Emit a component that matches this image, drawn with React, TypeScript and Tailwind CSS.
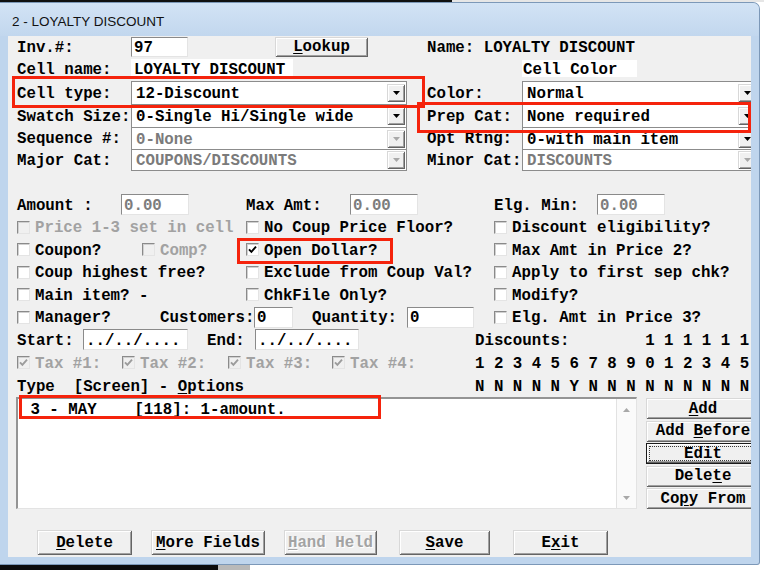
import React from "react";

// Classic 3D bevels used by buttons and the drop-down arrows.
const RAISED =
  "shadow-[inset_1px_1px_0_#d8d8d8,inset_-1px_-1px_0_#646464,inset_2px_2px_0_#ffffff,inset_-2px_-2px_0_#a0a0a0]";
const FOCUSED =
  "shadow-[inset_0_0_0_1px_#1a1a1a,inset_-2px_-2px_0_#646464,inset_2px_2px_0_#ffffff,inset_-3px_-3px_0_#a0a0a0]";
const SUNKEN =
  "border border-t-[#8a8a8a] border-l-[#8a8a8a] border-r-[#e4e4e4] border-b-[#e4e4e4]";
// The mono face sits a little high in its line box; nudge glyphs onto the row centre.
const T = "translate-y-[2px]";

function U({ children }: { children: React.ReactNode }) {
  return <span className="underline decoration-1 underline-offset-[2px]">{children}</span>;
}

function Tri({ grey, up }: { grey?: boolean; up?: boolean }) {
  return (
    <svg width="7" height="4" viewBox="0 0 7 4" className="block">
      <path d={up ? "M0 4H7L3.5 0Z" : "M0 0H7L3.5 4Z"} fill={grey ? "#a8a8a8" : "#000"} />
    </svg>
  );
}

function DropBtn({ grey }: { grey?: boolean }) {
  return (
    <div className={`mr-[1px] flex h-[18px] w-[18px] shrink-0 items-center justify-center bg-[#f0f0f0] ${RAISED}`}>
      <Tri grey={grey} />
    </div>
  );
}

function Combo({ w, text, grey, last }: { w: string; text: string; grey?: boolean; last?: boolean }) {
  return (
    <div
      className={`${w} flex h-full shrink-0 items-center border-x border-t border-[#8c8c8c] bg-white pl-[4px] ${
        last ? "border-b" : ""
      }`}
    >
      <span className={`flex-1 whitespace-pre ${T} ${grey ? "text-[#7b7b7b]" : "text-black"}`}>{text}</span>
      <DropBtn grey={grey} />
    </div>
  );
}

function Field({ w, text, grey, h }: { w: string; text: string; grey?: boolean; h?: string }) {
  return (
    <div
      className={`${w} ${h ?? "h-[21px]"} flex shrink-0 items-center whitespace-pre bg-white pl-[2px] ${SUNKEN} ${
        grey ? "text-[#7d7d7d]" : "text-black"
      }`}
    >
      <span className={T}>{text}</span>
    </div>
  );
}

function Box({ checked, disabled }: { checked?: boolean; disabled?: boolean }) {
  return (
    <span
      className={`flex h-[13px] w-[13px] shrink-0 items-center justify-center shadow-[inset_1px_1px_0_#d0d0d0] ${SUNKEN} ${
        disabled ? "bg-[#f0f0f0]" : "bg-white"
      }`}
    >
      {checked && (
        <svg width="9" height="9" viewBox="0 0 9 9" className="block">
          <path d="M1 4.3L3.4 6.8L8 1.6" fill="none" stroke={disabled ? "#9c9c9c" : "#000"} strokeWidth="1.9" />
        </svg>
      )}
    </span>
  );
}

function CheckItem({
  label,
  checked,
  disabled,
  w,
}: {
  label: string;
  checked?: boolean;
  disabled?: boolean;
  w?: string;
}) {
  return (
    <div className={`${w ?? ""} flex shrink-0 items-center gap-[5px]`}>
      <Box checked={checked} disabled={disabled} />
      <span className={`whitespace-pre ${T} ${disabled ? "text-[#a2a2a2]" : "text-black"}`}>{label}</span>
    </div>
  );
}

function Btn({
  w,
  h,
  children,
  disabled,
  focused,
  className,
}: {
  w: string;
  h: string;
  children: React.ReactNode;
  disabled?: boolean;
  focused?: boolean;
  className?: string;
}) {
  return (
    <div
      className={`${w} ${h} ${className ?? ""} relative flex shrink-0 items-center justify-center whitespace-pre bg-[#f0f0f0] ${
        focused ? FOCUSED : RAISED
      } ${disabled ? "text-[#a3a3a3] [text-shadow:1px_1px_0_#ffffff]" : "text-black"}`}
    >
      {focused && <span className="absolute inset-[3px] border border-dotted border-[#3a3a3a]" />}
      <span className="translate-y-[1px]">{children}</span>
    </div>
  );
}

function Label({ w, children, className }: { w: string; children: React.ReactNode; className?: string }) {
  return (
    <span className={`${w} ${className ?? ""} flex shrink-0 items-center whitespace-pre`}>
      <span className={T}>{children}</span>
    </span>
  );
}

export default function App() {
  return (
    <div className="relative h-[570px] w-[764px] overflow-hidden bg-white font-['Liberation_Mono',monospace] text-[15.75px] font-bold leading-none text-black">
      {/* desktop strip above the window */}
      <div className="flex h-[2px]">
        <div className="w-[452px] bg-[#101010]" />
        <div className="flex-1 bg-[#e6e6e6]" />
      </div>

      {/* window */}
      <div className="flex h-[563px] w-[760px] flex-col overflow-hidden rounded-tr-[7px] rounded-br-[3px] border-t border-r border-b border-[#7c98b8] bg-[#bfd5ed]">
        <div className="flex h-[33px] shrink-0 items-center bg-linear-to-b from-[#d2e3f5] to-[#c2d7ee] pl-[12px] pt-[5px] font-['Liberation_Sans',Arial,sans-serif] text-[13.5px] font-normal text-[#111]">
          2 - LOYALTY DISCOUNT
        </div>

        <div className="flex">
          <div className="w-[8px] shrink-0" />
          <div className="flex h-[521px] w-[743px] shrink-0 flex-col overflow-hidden bg-[#f0f0f0] pl-[9px]">
            {/* header fields */}
            <div className="flex h-[21px] shrink-0 items-center">
              <Label w="w-[114px]">Inv.#:</Label>
              <Field w="w-[57px]" h="h-[20px]" text="97" />
              <Btn w="w-[93px]" h="h-[20px]" className="ml-[87px]">
                <U>L</U>ookup
              </Btn>
              <Label w="w-auto" className="ml-[59px]">
                Name: LOYALTY DISCOUNT
              </Label>
            </div>
            <div className="flex h-[23px] shrink-0 items-center">
              <Label w="w-[114px]">Cell name:</Label>
              <div className="flex h-[20px] w-[162px] shrink-0 items-center whitespace-pre bg-white pl-[3px]">
                <span className={T}>LOYALTY DISCOUNT</span>
              </div>
              <div className="ml-[229px] flex h-[17px] w-[115px] shrink-0 items-center bg-white pl-[1px]">
                <span className={T}>Cell Color</span>
              </div>
            </div>
            <div className="h-[1px] shrink-0" />

            {/* combo boxes */}
            <div className="flex h-[23px] shrink-0">
              <Label w="w-[114px]">Cell type:</Label>
              <Combo w="w-[276px]" text="12-Discount" />
              <Label w="w-[95px]" className="ml-[20px]">Color:</Label>
              <Combo w="w-[236px]" text="Normal" />
            </div>
            <div className="flex h-[23px] shrink-0">
              <Label w="w-[114px]">Swatch Size:</Label>
              <Combo w="w-[276px]" text="0-Single Hi/Single wide" />
              <Label w="w-[95px]" className="ml-[20px]">Prep Cat:</Label>
              <Combo w="w-[236px]" text="None required" />
            </div>
            <div className="flex h-[22px] shrink-0">
              <Label w="w-[114px]">Sequence #:</Label>
              <Combo w="w-[276px]" text="0-None" grey />
              <Label w="w-[95px]" className="ml-[20px]">Opt Rtng:</Label>
              <Combo w="w-[236px]" text="0-with main item" />
            </div>
            <div className="flex h-[22px] shrink-0">
              <Label w="w-[114px]">Major Cat:</Label>
              <Combo w="w-[276px]" text="COUPONS/DISCOUNTS" grey last />
              <Label w="w-[95px]" className="ml-[20px]">Minor Cat:</Label>
              <Combo w="w-[236px]" text="DISCOUNTS" grey last />
            </div>

            <div className="h-[22px] shrink-0" />

            {/* amounts */}
            <div className="flex h-[23px] shrink-0 items-center">
              <Label w="w-[104px]">Amount :</Label>
              <Field w="w-[68px]" text="0.00" grey />
              <Label w="w-[104px]" className="ml-[57px]">Max Amt:</Label>
              <Field w="w-[68px]" text="0.00" grey />
              <Label w="w-[103px]" className="ml-[76px]">Elg. Min:</Label>
              <Field w="w-[68px]" text="0.00" grey />
            </div>

            {/* option check boxes */}
            <div className="flex h-[22px] shrink-0 items-center">
              <CheckItem w="w-[229px]" label="Price 1-3 set in cell" disabled />
              <CheckItem w="w-[248px]" label="No Coup Price Floor?" />
              <CheckItem label="Discount eligibility?" />
            </div>
            <div className="flex h-[23px] shrink-0 items-center">
              <div className="flex w-[229px] shrink-0 items-center">
                <CheckItem w="w-[125px]" label="Coupon?" />
                <CheckItem label="Comp?" disabled />
              </div>
              <CheckItem w="w-[248px]" label="Open Dollar?" checked />
              <CheckItem label="Max Amt in Price 2?" />
            </div>
            <div className="flex h-[22px] shrink-0 items-center">
              <CheckItem w="w-[229px]" label="Coup highest free?" />
              <CheckItem w="w-[248px]" label="Exclude from Coup Val?" />
              <CheckItem label="Apply to first sep chk?" />
            </div>
            <div className="flex h-[23px] shrink-0 items-center">
              <CheckItem w="w-[229px]" label="Main item? -" />
              <CheckItem w="w-[248px]" label="ChkFile Only?" />
              <CheckItem label="Modify?" />
            </div>
            <div className="flex h-[22px] shrink-0 items-center">
              <CheckItem w="w-[143px]" label="Manager?" />
              <Label w="w-[94px]">Customers:</Label>
              <Field w="w-[39px]" text="0" />
              <Label w="w-[95px]" className="ml-[19px]">Quantity:</Label>
              <Field w="w-[67px]" text="0" />
              <div className="ml-[20px]">
                <CheckItem label="Elg. Amt in Price 3?" />
              </div>
            </div>

            {/* dates and discount table */}
            <div className="flex h-[23px] shrink-0 items-center">
              <Label w="w-[66px]">Start:</Label>
              <Field w="w-[105px]" text="../../...." />
              <Label w="w-[48px]" className="ml-[19px]">End:</Label>
              <Field w="w-[104px]" text="../../...." />
              <Label w="w-auto" className="ml-[116px]">
                Discounts:        1 1 1 1 1 1
              </Label>
            </div>
            <div className="flex h-[23px] shrink-0 items-center">
              <CheckItem w="w-[105px]" label="Tax #1:" checked disabled />
              <CheckItem w="w-[106px]" label="Tax #2:" checked disabled />
              <CheckItem w="w-[104px]" label="Tax #3:" checked disabled />
              <CheckItem w="w-[143px]" label="Tax #4:" checked disabled />
              <Label w="w-auto">1 2 3 4 5 6 7 8 9 0 1 2 3 4 5</Label>
            </div>
            <div className="flex h-[23px] shrink-0 items-center">
              <Label w="w-[458px]">
                Type  [Screen] - <U>O</U>ptions
              </Label>
              <Label w="w-auto">N N N N N Y N N N N N N N N N</Label>
            </div>

            {/* options list and its buttons */}
            <div className="flex h-[112px] shrink-0">
              <div className="-ml-[1px] flex h-full w-[621px] shrink-0 border-t-2 border-l-2 border-r border-b border-t-[#949494] border-l-[#949494] border-r-[#e3e3e3] border-b-[#e3e3e3] bg-white">
                <div className="flex-1 pt-[1px]">
                  <div className="flex h-[19px] items-center whitespace-pre pl-[3px]">
                    <span className="translate-y-[1px]">{" 3 - MAY    [118]: 1-amount."}</span>
                  </div>
                </div>
                <div className="flex w-[20px] shrink-0 flex-col items-center justify-between border-l border-[#e2e2e2] bg-[#fafafa] pt-[9px] pb-[8px]">
                  <Tri grey up />
                  <Tri grey />
                </div>
              </div>
              <div className="ml-[9px] flex w-[114px] shrink-0 flex-col gap-[1.5px] pt-[1px]">
                <Btn w="w-[114px]" h="h-[21px]">
                  <U>A</U>dd
                </Btn>
                <Btn w="w-[114px]" h="h-[21px]">
                  Add <U>B</U>efore
                </Btn>
                <Btn w="w-[114px]" h="h-[21px]" focused>
                  Edit
                </Btn>
                <Btn w="w-[114px]" h="h-[21px]">
                  Dele<U>t</U>e
                </Btn>
                <Btn w="w-[114px]" h="h-[21px]">
                  Co<U>p</U>y From
                </Btn>
              </div>
            </div>

            {/* bottom command buttons */}
            <div className="mt-[21px] flex h-[25px] shrink-0">
              <Btn w="w-[95px]" h="h-[25px]" className="ml-[20px]">
                <U>D</U>elete
              </Btn>
              <Btn w="w-[114px]" h="h-[25px]" className="ml-[19px]">
                <U>M</U>ore Fields
              </Btn>
              <Btn w="w-[93px]" h="h-[25px]" className="ml-[19px]" disabled>
                <U>H</U>and Held
              </Btn>
              <Btn w="w-[91px]" h="h-[25px]" className="ml-[22px]">
                <U>S</U>ave
              </Btn>
              <Btn w="w-[95px]" h="h-[25px]" className="ml-[23px]">
                E<U>x</U>it
              </Btn>
            </div>
          </div>
        </div>
      </div>

      {/* taskbar edge below the window */}
      <div className="flex h-[5px]">
        <div className="w-[218px] bg-[#0c0c0c]" />
        <div className="w-[32px] bg-[#b9b9b9]" />
        <div className="flex-1 bg-white" />
      </div>

      {/* highlight frames drawn over the form */}
      <div className="absolute left-[12px] top-[76px] h-[32px] w-[413px] border-[3px] border-[#f5230c]" />
      <div className="absolute left-[417px] top-[102px] h-[31px] w-[334px] border-[3px] border-[#f5230c]" />
      <div className="absolute left-[237px] top-[238px] h-[26px] w-[156px] border-[3px] border-[#f5230c]" />
      <div className="absolute left-[19px] top-[395px] h-[24px] w-[362px] border-[3px] border-[#f5230c]" />
    </div>
  );
}
